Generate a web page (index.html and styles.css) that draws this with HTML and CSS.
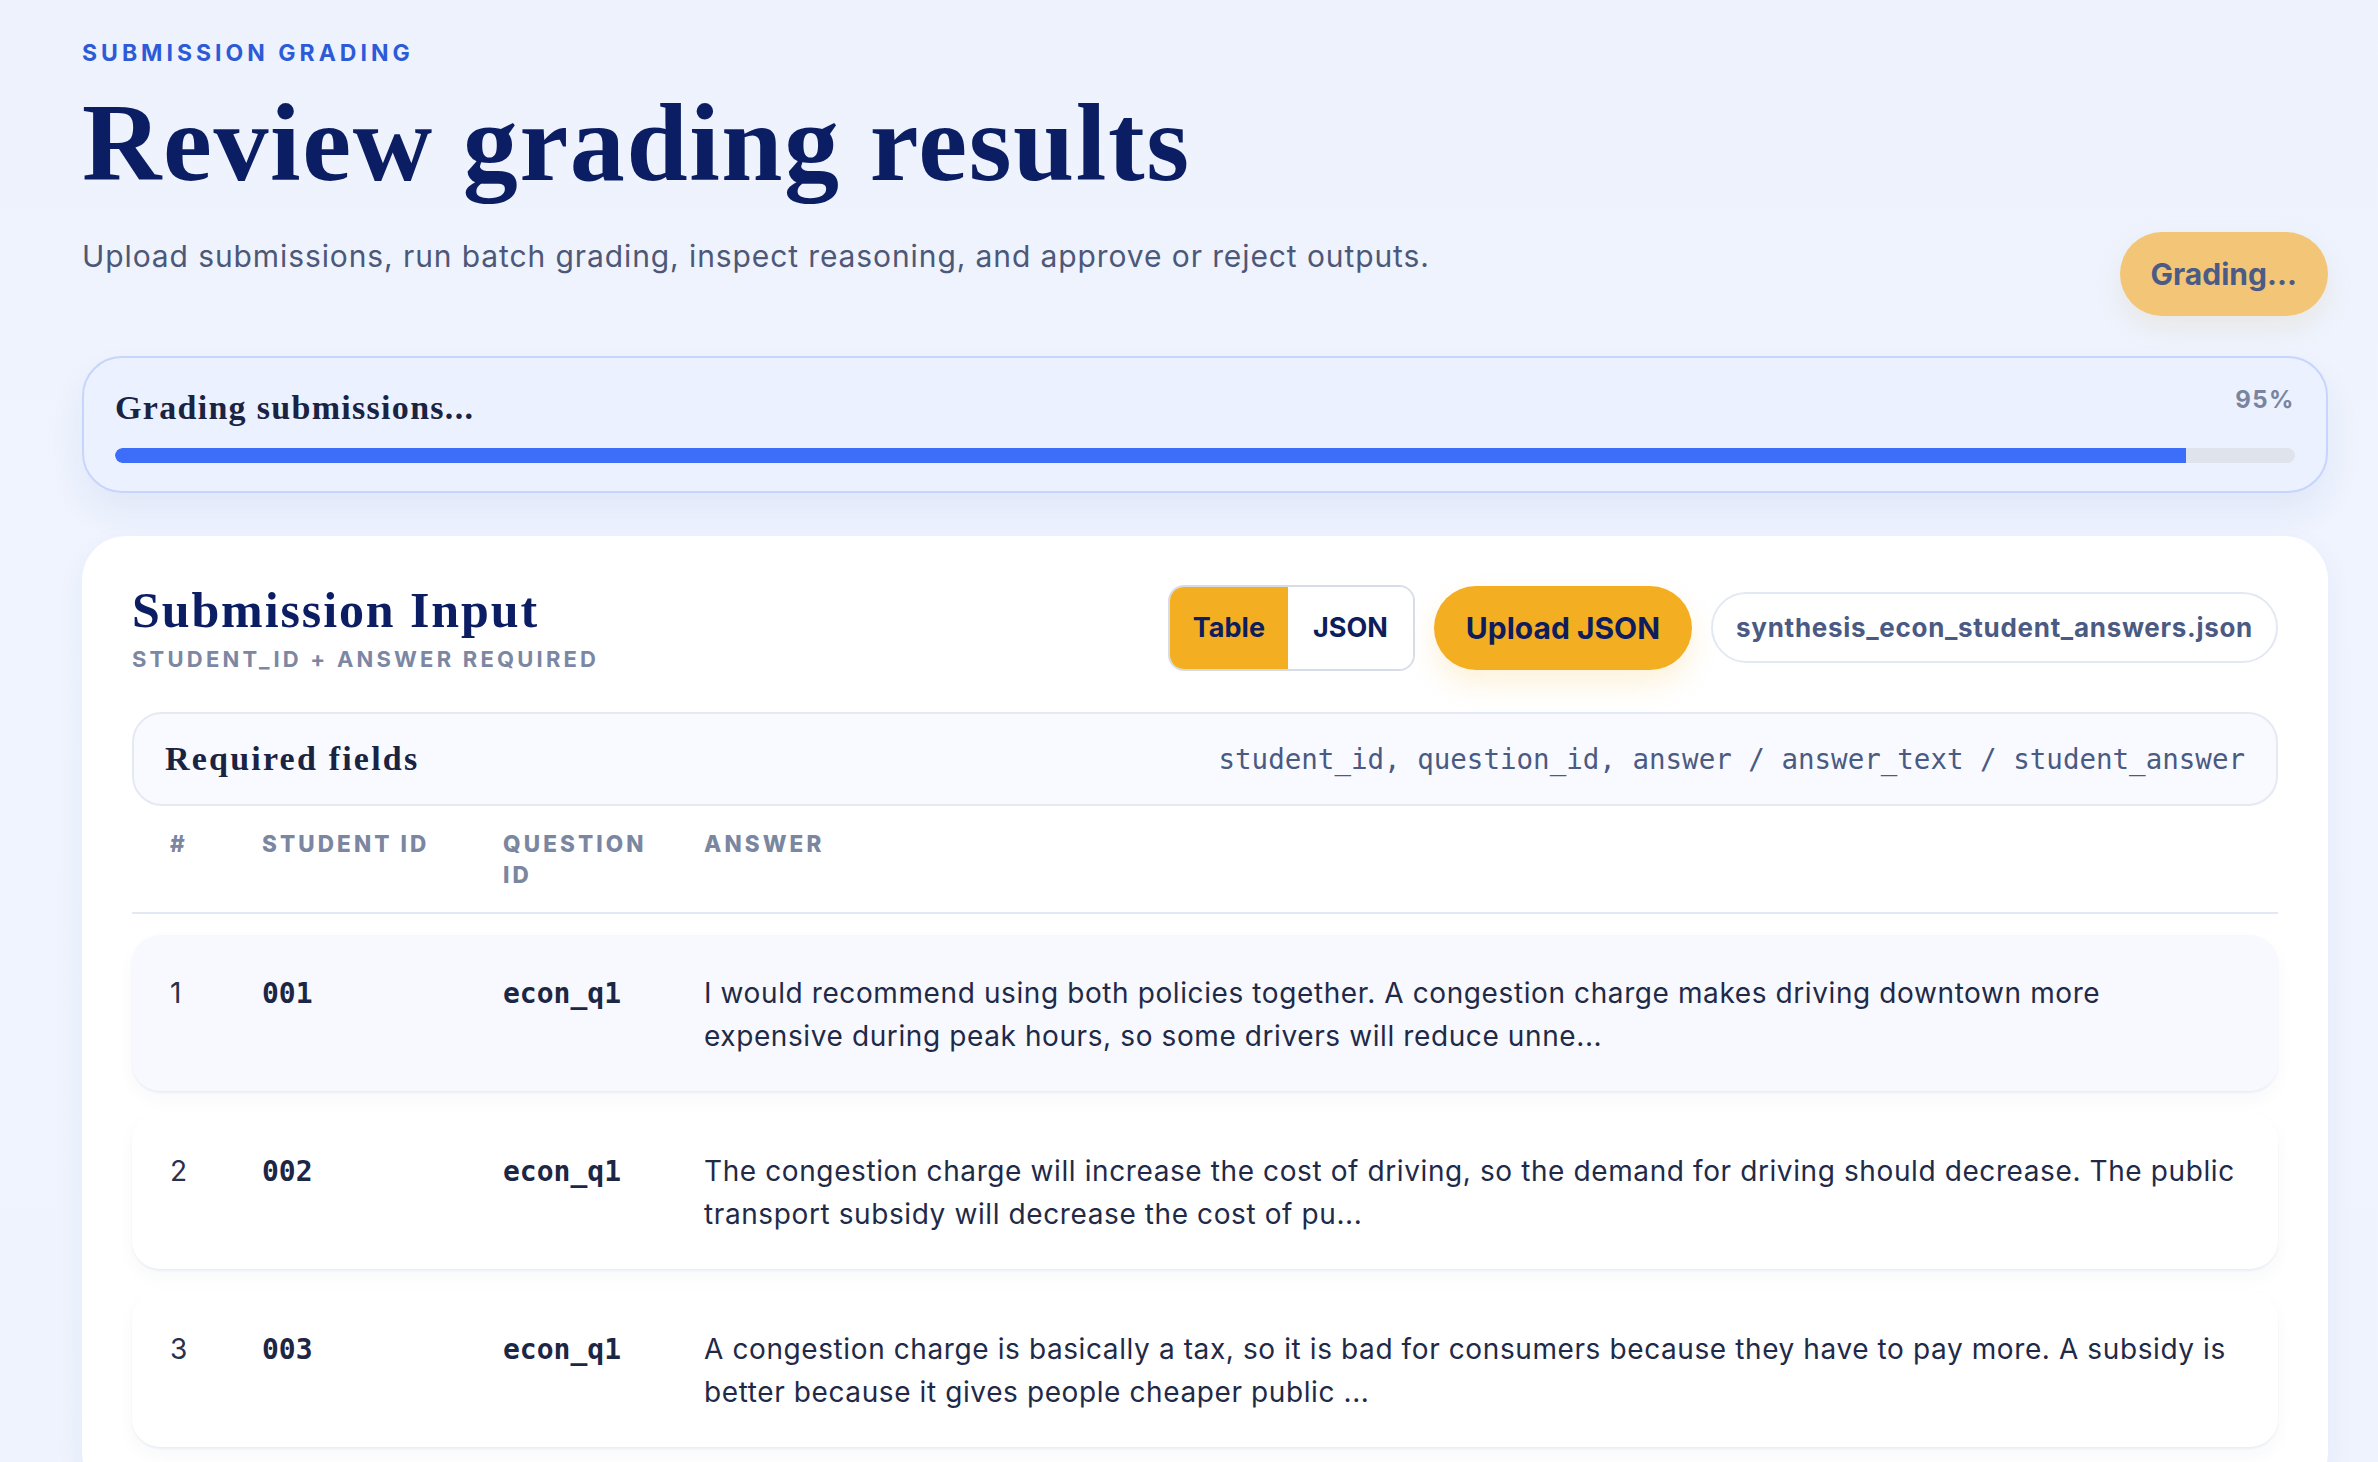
FILE: index.html
```html
<!DOCTYPE html>
<html lang="en">
<head>
<meta charset="utf-8">
<title>Review grading results</title>
<link rel="stylesheet" href="styles.css">
</head>
<body>
<main class="page">
  <header class="hero">
    <div class="hero-text">
      <p class="eyebrow">SUBMISSION GRADING</p>
      <h1 class="title">Review grading results</h1>
      <p class="subtitle">Upload submissions, run batch grading, inspect reasoning, and approve or reject outputs.</p>
    </div>
    <button class="btn-grading" type="button" disabled>Grading...</button>
  </header>

  <section class="progress-card">
    <div class="progress-head">
      <span class="progress-label">Grading submissions...</span>
      <span class="progress-pct">95%</span>
    </div>
    <div class="progress-track"><div class="progress-fill" style="width:95%"></div></div>
  </section>

  <section class="card">
    <div class="card-head">
      <div class="card-heading">
        <h2 class="card-title">Submission Input</h2>
        <p class="card-sub">STUDENT_ID + ANSWER REQUIRED</p>
      </div>
      <div class="card-actions">
        <div class="toggle">
          <button class="seg seg-active" type="button">Table</button>
          <button class="seg" type="button">JSON</button>
        </div>
        <button class="btn-upload" type="button">Upload JSON</button>
        <span class="file-pill">synthesis_econ_student_answers.json</span>
      </div>
    </div>

    <div class="required">
      <span class="required-title">Required fields</span>
      <code class="required-fields">student_id, question_id, answer / answer_text / student_answer</code>
    </div>

    <div class="thead cols">
      <div class="th">#</div>
      <div class="th">Student ID</div>
      <div class="th">Question ID</div>
      <div class="th">Answer</div>
    </div>

    <div class="rows">
      <div class="row cols row-active">
        <div class="td td-num">1</div>
        <div class="td td-mono">001</div>
        <div class="td td-mono">econ_q1</div>
        <div class="td td-answer">I would recommend using both policies together. A congestion charge makes driving downtown more expensive during peak hours, so some drivers will reduce unne...</div>
      </div>
      <div class="row cols">
        <div class="td td-num">2</div>
        <div class="td td-mono">002</div>
        <div class="td td-mono">econ_q1</div>
        <div class="td td-answer">The congestion charge will increase the cost of driving, so the demand for driving should decrease. The public transport subsidy will decrease the cost of pu...</div>
      </div>
      <div class="row cols">
        <div class="td td-num">3</div>
        <div class="td td-mono">003</div>
        <div class="td td-mono">econ_q1</div>
        <div class="td td-answer">A congestion charge is basically a tax, so it is bad for consumers because they have to pay more. A subsidy is better because it gives people cheaper public ...</div>
      </div>
    </div>
  </section>
</main>
</body>
</html>
```

FILE: styles.css
```css
* { box-sizing: border-box; }

html, body { margin: 0; padding: 0; }

body {
  background: linear-gradient(180deg, #edf2fd 0%, #eff4fe 40%, #eef3fd 100%);
  font-family: Inter, "Noto Sans", sans-serif;
  color: #1f2a48;
  min-height: 100vh;
}

.page {
  padding: 39px 50px 0 82px;
}

/* Hero */
.hero {
  display: flex;
  justify-content: space-between;
  align-items: flex-end;
}

.eyebrow {
  margin: 0;
  font-size: 23px;
  line-height: 28px;
  font-weight: 700;
  letter-spacing: 4px;
  color: #2d5bd7;
}

.title {
  margin: 16px 0 0;
  font-family: "Liberation Serif", "Times New Roman", serif;
  font-weight: 700;
  font-size: 110px;
  line-height: 121px;
  letter-spacing: 1.6px;
  color: #0c1e63;
}

.subtitle {
  margin: 32px 0 40px;
  font-size: 30px;
  line-height: 40px;
  letter-spacing: 0.9px;
  color: #4d5878;
}

.btn-grading {
  height: 84px;
  padding: 0 31px;
  border: none;
  border-radius: 999px;
  background: #f3c577;
  color: #4c5b85;
  font-family: Inter, sans-serif;
  font-weight: 700;
  font-size: 30px;
  box-shadow: 0 12px 26px rgba(200, 160, 90, 0.14);
}

/* Progress */
.progress-card {
  margin-top: 40px;
  border: 2px solid #c6d5fb;
  border-radius: 40px;
  background: #ebf1fe;
  padding: 30px 31px 28px 31px;
  box-shadow: 0 18px 36px rgba(40, 70, 150, 0.07);
}

.progress-head {
  display: flex;
  justify-content: space-between;
  align-items: flex-start;
}

.progress-label {
  font-family: "Liberation Serif", "Times New Roman", serif;
  font-weight: 700;
  font-size: 34px;
  line-height: 40px;
  letter-spacing: 1.3px;
  color: #1a2342;
}

.progress-pct {
  font-weight: 700;
  font-size: 24px;
  line-height: 30px;
  letter-spacing: 1.5px;
  color: #7a849e;
  margin-top: -3px;
}

.progress-track {
  margin-top: 20px;
  height: 15px;
  border-radius: 999px;
  background: #dfe3ec;
  overflow: hidden;
}

.progress-fill {
  height: 100%;
  background: #3d6ef9;
  border-radius: 999px 0 0 999px;
}

/* Card */
.card {
  margin-top: 43px;
  background: #ffffff;
  border-radius: 44px;
  padding: 46px 50px 50px;
  box-shadow: 0 10px 30px rgba(40, 70, 150, 0.05);
}

.card-head {
  display: flex;
  justify-content: space-between;
  align-items: center;
}

.card-title {
  margin: 0;
  font-family: "Liberation Serif", "Times New Roman", serif;
  font-weight: 700;
  font-size: 50px;
  line-height: 57px;
  letter-spacing: 1.9px;
  color: #0c1e63;
}

.card-sub {
  margin: 6px 0 0;
  font-size: 22px;
  line-height: 28px;
  font-weight: 700;
  letter-spacing: 3.2px;
  color: #7c87a3;
}

.card-actions {
  display: flex;
  align-items: center;
  gap: 19px;
}

.toggle {
  display: flex;
  height: 86px;
  border: 2px solid #d7dce6;
  border-radius: 16px;
  overflow: hidden;
  background: #fff;
}

.seg {
  border: none;
  background: #ffffff;
  padding: 0 25px;
  font-family: Inter, sans-serif;
  font-weight: 700;
  font-size: 27px;
  color: #0e1d5c;
}

.seg-active {
  background: #f4ae22;
  padding: 0 23px;
}

.btn-upload {
  height: 84px;
  padding: 0 32px;
  border: none;
  border-radius: 999px;
  background: #f4ae22;
  color: #0e1d5c;
  font-family: Inter, sans-serif;
  font-weight: 700;
  font-size: 30px;
  box-shadow: 0 14px 28px rgba(244, 174, 34, 0.16);
}

.file-pill {
  display: flex;
  align-items: center;
  height: 71px;
  padding: 0 23px;
  border: 2px solid #e3e8f2;
  border-radius: 999px;
  background: #fff;
  font-weight: 700;
  font-size: 26px;
  letter-spacing: 0.7px;
  color: #4b5a82;
}

/* Required fields */
.required {
  margin-top: 39px;
  height: 94px;
  display: flex;
  justify-content: space-between;
  align-items: center;
  padding: 0 31px;
  border: 2px solid #e4e9f3;
  border-radius: 30px;
  background: #f8faff;
}

.required-title {
  font-family: "Liberation Serif", "Times New Roman", serif;
  font-weight: 700;
  font-size: 34px;
  line-height: 40px;
  letter-spacing: 2.2px;
  color: #1a2342;
}

.required-fields {
  font-family: "DejaVu Sans Mono", "Liberation Mono", monospace;
  font-size: 27.5px;
  color: #4b5a82;
}

/* Table */
.cols {
  display: grid;
  grid-template-columns: 92px 241px 201px 1fr;
}

.thead {
  padding: 22px 0 22px;
  border-bottom: 2px solid #e3e8f2;
}

.th {
  padding-left: 38px;
  font-size: 22.5px;
  line-height: 31px;
  font-weight: 800;
  letter-spacing: 3.1px;
  text-transform: uppercase;
  color: #7b86a0;
}

.rows {
  margin-top: 21px;
  display: flex;
  flex-direction: column;
  gap: 22px;
}

.row {
  padding: 37px 0 33px;
  border-radius: 28px;
  background: #ffffff;
  box-shadow: 0 2px 2px rgba(25, 45, 110, 0.05), 0 8px 18px rgba(25, 45, 110, 0.035);
}

.row-active {
  background: #f7f9fe;
}

.td {
  padding-left: 38px;
  font-size: 28px;
  line-height: 43px;
}

.td-num {
  color: #27304d;
}

.td-mono {
  font-family: "DejaVu Sans Mono", "Liberation Mono", monospace;
  font-weight: 700;
  color: #1c2645;
}

.td-answer {
  padding-right: 30px;
  letter-spacing: 0.6px;
  color: #1f2a48;
}
```
